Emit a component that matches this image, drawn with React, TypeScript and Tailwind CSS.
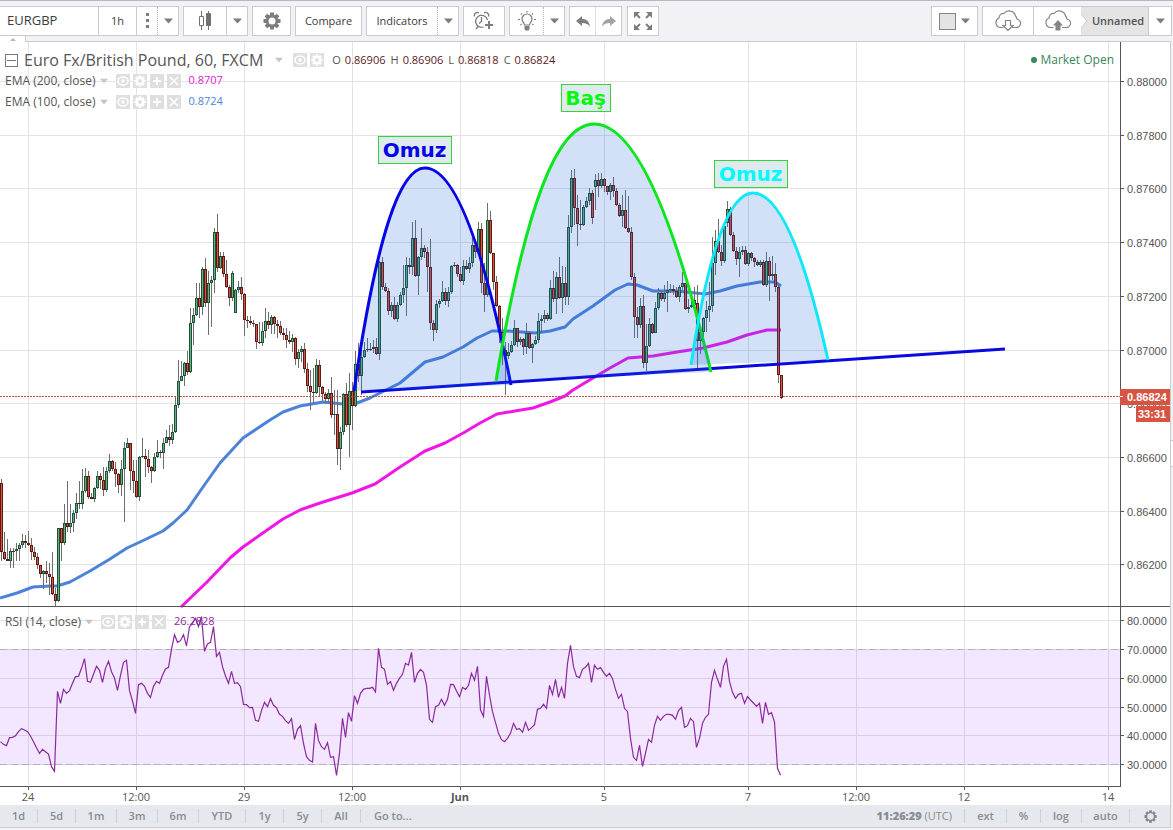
import React from 'react';
import clsx from 'clsx';

// [close, high, low, open?] in plot pixels, the open defaults to the previous close
const candles: number[][] = [
  [552, 479, 561, 483], [559, 532, 560], [561, 539, 561], [551, 548, 568], [551, 548, 568], [549, 543, 561], [545, 543, 561], [541, 534, 548],
  [543, 535, 548], [545, 531, 546], [552, 538, 560], [557, 547, 560], [565, 553, 569], [574, 565, 578], [571, 570, 589], [574, 561, 583],
  [577, 563, 595], [594, 552, 595], [601, 588, 606], [528, 528, 602], [543, 528, 561], [523, 504, 545], [527, 481, 532], [523, 504, 533],
  [513, 510, 532], [503, 493, 519], [504, 481, 509], [491, 469, 509], [476, 468, 493], [497, 471, 499], [499, 493, 499], [488, 487, 502],
  [476, 471, 489], [480, 473, 489], [490, 467, 496], [471, 467, 492], [461, 454, 473], [469, 460, 471], [474, 462, 487], [485, 473, 493],
  [469, 460, 496], [448, 442, 522], [443, 438, 448], [471, 443, 490], [481, 460, 493], [497, 460, 498], [457, 456, 501], [456, 438, 458],
  [459, 449, 477], [467, 450, 473], [471, 466, 483], [457, 453, 472], [452, 440, 458], [453, 450, 458], [443, 438, 469], [437, 430, 443],
  [440, 425, 446], [432, 424, 444], [405, 396, 433], [381, 360, 408], [376, 361, 381], [363, 362, 386], [372, 351, 375], [323, 308, 373],
  [315, 308, 345], [298, 283, 316], [307, 283, 318], [269, 267, 315], [303, 258, 307], [283, 271, 335], [280, 276, 327], [232, 228, 293],
  [268, 214, 272], [256, 252, 269], [274, 252, 277], [287, 260, 288], [298, 285, 306], [273, 271, 301], [290, 289, 313, 313], [287, 281, 293],
  [294, 277, 300], [320, 293, 336], [321, 316, 328], [323, 316, 325], [324, 320, 327], [342, 324, 349], [343, 322, 344], [331, 322, 346],
  [321, 308, 338], [325, 312, 329], [317, 315, 334], [324, 316, 334], [326, 320, 338], [333, 321, 335], [335, 328, 340], [340, 328, 348],
  [342, 331, 344], [338, 334, 352], [359, 337, 365], [352, 349, 368], [349, 346, 362], [369, 343, 373], [386, 363, 392], [392, 370, 410],
  [393, 368, 403], [365, 359, 394], [387, 360, 397], [394, 386, 401], [399, 392, 404], [393, 389, 404], [415, 377, 418], [414, 390, 435],
  [449, 390, 465], [432, 427, 470], [394, 393, 435], [425, 383, 427], [391, 373, 457], [406, 382, 430], [364, 351, 407], [376, 343, 382],
  [357, 350, 395], [350, 342, 358], [349, 338, 352], [349, 343, 351], [347, 340, 353], [354, 338, 355], [262, 261, 360], [287, 257, 290],
  [291, 283, 292], [311, 288, 315], [305, 302, 317], [319, 297, 320], [305, 302, 322], [295, 292, 306], [288, 265, 303], [265, 257, 316],
  [267, 258, 274], [238, 222, 275], [276, 220, 277], [257, 256, 295], [248, 228, 260], [252, 245, 258], [267, 247, 292], [323, 239, 330],
  [330, 320, 341], [304, 300, 333], [301, 299, 308], [292, 281, 302], [301, 288, 305], [292, 287, 307], [266, 265, 294], [265, 262, 267],
  [274, 264, 277], [281, 267, 282], [266, 260, 285], [269, 260, 270], [263, 257, 273], [245, 238, 267], [252, 243, 258], [229, 222, 253],
  [283, 223, 293], [295, 263, 312], [220, 203, 297], [253, 211, 254], [282, 253, 290], [306, 276, 307], [332, 305, 343], [350, 318, 365],
  [356, 342, 395], [352, 343, 359], [345, 341, 353], [328, 320, 346], [342, 328, 347], [339, 337, 345], [347, 338, 355], [333, 323, 354],
  [348, 332, 349], [344, 343, 363], [340, 336, 345], [321, 313, 343], [319, 315, 333], [315, 310, 323], [319, 313, 321], [288, 280, 320],
  [299, 271, 302], [277, 272, 314], [298, 257, 299], [283, 266, 313], [297, 267, 305], [227, 215, 305], [178, 170, 233], [208, 169, 225],
  [224, 195, 246], [225, 200, 230], [207, 205, 226], [201, 197, 208], [193, 188, 205], [218, 190, 224], [180, 174, 210, 187], [186, 173, 197],
  [179, 173, 188], [186, 178, 192], [192, 186, 195], [185, 183, 200], [191, 177, 197], [205, 188, 206], [216, 203, 217], [210, 195, 227],
  [228, 190, 229], [232, 196, 233], [277, 227, 280], [317, 273, 338], [325, 307, 338], [306, 298, 328], [363, 295, 368], [346, 324, 371],
  [324, 318, 347], [333, 323, 334], [308, 302, 333], [293, 288, 310], [299, 291, 301], [293, 285, 302], [290, 281, 312], [289, 284, 293],
  [291, 285, 295], [297, 287, 298], [287, 285, 302], [283, 272, 290], [309, 283, 310], [307, 299, 313], [305, 298, 308], [300, 287, 308],
  [341, 285, 368, 303], [332, 329, 354], [318, 317, 342], [310, 301, 332], [306, 282, 322], [263, 237, 312], [241, 230, 275], [252, 219, 253],
  [261, 245, 266], [226, 224, 263], [209, 201, 227, 223], [235, 207, 236], [251, 232, 252], [259, 247, 265], [252, 247, 277], [250, 246, 255],
  [264, 246, 265], [253, 252, 266], [258, 252, 261], [262, 257, 267], [265, 260, 266], [262, 260, 267], [285, 260, 286], [261, 252, 287],
  [276, 257, 301], [274, 256, 280], [287, 263, 292], [375, 285, 383], [398, 375, 399],
];

// three units to a pixel, measured from RSI_TOP
const RSI_TOP = 600;
const rsi = [
  425, 433, 437, 413, 412, 407, 395, 386, 390, 395, 408, 425, 443, 460, 448, 455, 462, 500, 514, 274, 310, 268, 280, 272, 250, 230, 229, 205, 176,
  244, 247, 223, 199, 211, 247, 205, 184, 215, 234, 271, 226, 187, 181, 272, 303, 340, 254, 250, 259, 280, 292, 259, 244, 250, 226, 207, 202, 148,
  104, 127, 122, 104, 138, 80, 70, 55, 80, 50, 154, 132, 127, 80, 169, 157, 200, 228, 250, 214, 250, 248, 260, 313, 314, 323, 322, 361, 364, 332,
  307, 320, 296, 316, 323, 343, 349, 362, 370, 356, 418, 388, 377, 430, 470, 481, 486, 370, 422, 440, 448, 428, 472, 470, 526, 460, 355, 412, 338,
  364, 287, 310, 280, 268, 265, 265, 262, 276, 145, 202, 208, 253, 245, 271, 250, 235, 223, 190, 195, 157, 247, 220, 208, 217, 255, 358, 367, 320,
  316, 298, 316, 298, 253, 254, 273, 290, 262, 268, 256, 220, 241, 199, 330, 349, 229, 285, 335, 368, 400, 419, 425, 415, 400, 370, 388, 386, 397,
  367, 391, 383, 374, 328, 325, 313, 325, 256, 283, 238, 292, 262, 295, 190, 136, 200, 229, 233, 208, 202, 190, 247, 196, 208, 203, 217, 229, 220,
  236, 268, 295, 283, 325, 335, 415, 472, 481, 436, 499, 460, 418, 427, 376, 349, 361, 349, 343, 343, 346, 358, 332, 322, 382, 377, 355, 365, 442,
  415, 370, 352, 343, 247, 211, 238, 262, 199, 178, 244, 277, 295, 283, 280, 310, 290, 300, 309, 319, 310, 370, 307, 343, 338, 366, 505, 526,
];

const ema100 =
  '0,598 17,593 33,587 50,586 57,586 70,582 90,571 110,559 127,548 140,542 163,531 173,523 187,510 203,487 220,463 243,438 270,420 283,412 300,406 323,402 343,404 357,403 370,398 380,393 400,383 425,362 443,357 463,347 477,338 492,331 507,331 535,333 550,331 565,327 573,319 593,306 615,290 628,284 637,285 653,291 677,291 705,294 720,291 737,286 760,282 775,282 781,286';
const ema200 =
  '181,607 207,582 230,558 243,547 260,535 283,519 300,510 320,503 352,493 375,484 400,467 425,451 445,443 465,432 480,423 497,414 515,411 533,408 550,402 565,396 573,390 593,378 610,368 628,358 653,356 677,352 703,348 727,342 747,335 767,330 781,330';

const arcs = [
  { d: 'M354 391C376 240 399 168 425 168Q468 168 511 385', color: '#0505e6' },
  { d: 'M496 381C526 204 557 124 594 124Q652 124 711 372', color: '#0be61e' },
  { d: 'M691 365C709 247 730 193 753 193Q791 193 828 360', color: '#0fe8f7' },
];

const notes = [
  { x: 378, y: 136, w: 73, text: 'Omuz', color: '#0505e6' },
  { x: 561, y: 84, w: 49, text: 'Baş', color: '#00fa0c' },
  { x: 714, y: 160, w: 73, text: 'Omuz', color: '#00fbff' },
];

const times = [
  { x: 28, label: '24' },
  { x: 136, label: '12:00' },
  { x: 244, label: '29' },
  { x: 352, label: '12:00' },
  { x: 460, label: 'Jun', bold: true },
  { x: 604, label: '5' },
  { x: 748, label: '7' },
  { x: 856, label: '12:00' },
  { x: 964, label: '12' },
  { x: 1108, label: '14' },
];

const prices = ['0.88000', '0.87800', '0.87600', '0.87400', '0.87200', '0.87000', '0.86800', '0.86600', '0.86400', '0.86200'];
const priceY = (i: number) => Math.round(81 + i * 53.7) + 0.5;

const rsiLevels = [
  { y: 620.5, label: '80.0000' },
  { y: 649.5, label: '70.0000' },
  { y: 678.5, label: '60.0000' },
  { y: 707.5, label: '50.0000' },
  { y: 735.5, label: '40.0000' },
  { y: 764.5, label: '30.0000' },
];

const Caret = ({ className = 'fill-[#7d7d7d]' }: { className?: string }) => (
  <svg width="9" height="6" viewBox="0 0 9 6" className={clsx('shrink-0', className)}>
    <path d="M0 0.5h9L4.5 5.5z" />
  </svg>
);

const Gear = ({ size, color, hole, r = 3 }: { size: number; color: string; hole: string; r?: number }) => (
  <svg width={size} height={size} viewBox="0 0 18 18" fill={color}>
    {[0, 45, 90, 135].map((a) => (
      <rect key={a} x="7" y="0.5" width="4" height="17" rx="0.5" transform={`rotate(${a} 9 9)`} />
    ))}
    <circle cx="9" cy="9" r="6.3" />
    <circle cx="9" cy="9" r={r} fill={hole} />
  </svg>
);

const CloudShape = () => (
  <path d="M9.5 18.5H6a5 5 0 0 1-1-9.5 4.5 4.5 0 0 1 5-4.5 6.5 6.5 0 0 1 11.5 2.5a5 5 0 0 1 1.5 3 4.3 4.3 0 0 1-1.5 8.5h-3.5" fill="none" stroke="#858585" strokeWidth="1.2" />
);

const group = 'flex h-[30px] items-stretch border border-[#c9cbcf] bg-white';
const single = 'flex h-[30px] items-center justify-center border border-[#c9cbcf] bg-white';
const cell = 'flex items-center justify-center';

function Toolbar() {
  return (
    <header className="flex h-[41px] shrink-0 items-start justify-between border-t border-[#b9b8c2] bg-[#f1f1f6] pt-[5px] text-[11px] text-[#3c3c3c]">
      <div className="flex gap-1">
        <div className={clsx(group, 'w-[179px] border-l-0')}>
          <input aria-label="Symbol" defaultValue="EURGBP" className="w-[98px] pl-[7px] text-[13px] outline-none" />
          <button className={clsx(cell, 'w-[39px] border-x border-[#c9cbcf]')}>1h</button>
          <button aria-label="Favorite intervals" className={clsx(cell, 'w-[21px] border-r border-dotted border-[#b5b5b5]')}>
            <svg width="3" height="16" fill="#7d7d7d">
              <path d="M0 0h3v3H0zM0 6h3v3H0zM0 12h3v3H0z" />
            </svg>
          </button>
          <button aria-label="Intervals" className={clsx(cell, 'flex-1')}><Caret /></button>
        </div>
        <div className={clsx(group, 'w-[65px]')}>
          <button aria-label="Candles" className={clsx(cell, 'w-[43px] border-r border-[#c9cbcf]')}>
            <svg width="14" height="20" fill="none" stroke="#707070">
              <path d="M3.5 0v5M3.5 15v4M1.5 5.5h4v9h-4z" />
              <path d="M10.5 0v19" />
              <path d="M8.5 2.5h4v12h-4z" fill="#707070" />
            </svg>
          </button>
          <button aria-label="Chart types" className={clsx(cell, 'flex-1')}><Caret /></button>
        </div>
        <button aria-label="Settings" className={clsx(single, 'w-[39px]')}>
          <Gear size={18} color="#7d7d7d" hole="#fff" r={3.5} />
        </button>
        <button className={clsx(single, 'w-[67px]')}>Compare</button>
        <div className={clsx(group, 'w-[93px]')}>
          <button className={clsx(cell, 'w-[71px] border-r border-dotted border-[#b5b5b5]')}>Indicators</button>
          <button aria-label="Indicator templates" className={clsx(cell, 'flex-1')}><Caret /></button>
        </div>
        <button aria-label="Add alert" className={clsx(single, 'w-[42px]')}>
          <svg width="22" height="20" viewBox="0 0 22 20" fill="none" stroke="#7d7d7d" strokeWidth="1.3">
            <path d="M14.5 9a6 6 0 1 0-4 7M5 15.5l-2 2.5M8.5 6v4.5l-2.5 2" />
            <path d="M1.5 5.5a3 3 0 0 1 4.5-3.5M11 2a3 3 0 0 1 4.5 3.5" />
            <path d="M16 10v8M12 14h8" strokeWidth="2" />
          </svg>
        </button>
        <div className={clsx(group, 'w-[56px]')}>
          <button aria-label="Ideas" className={clsx(cell, 'w-[34px] border-r border-dotted border-[#b5b5b5]')}>
            <svg width="20" height="20" viewBox="0 0 20 20" fill="none" stroke="#7d7d7d" strokeWidth="1.2">
              <path d="M7.5 14c0-2-2.5-3-2.5-6a5 5 0 0 1 10 0c0 3-2.5 4-2.5 6z" />
              <path d="M7.5 15h5v3l-1 1.5h-3l-1-1.5z" fill="#7d7d7d" stroke="none" />
              <path d="M10 0v1.5M4 2.5l1 1M16 2.5l-1 1M1 8.5h2M17 8.5h2M3.5 14l1-1M16.5 14l-1-1" />
            </svg>
          </button>
          <button aria-label="More ideas" className={clsx(cell, 'flex-1')}><Caret /></button>
        </div>
        <div className={clsx(group, 'w-[53px]')}>
          <button aria-label="Undo" className={clsx(cell, 'w-[26px] border-r border-[#dcdde0]')}>
            <svg width="14" height="11" viewBox="0 0 14 11" fill="#7d7d7d"><path d="M0 5l6-5v3c4.5 0 7.5 2.5 8 8-1.5-3-4-4-8-4v3z" /></svg>
          </button>
          <button aria-label="Redo" className={clsx(cell, 'flex-1')}>
            <svg width="14" height="11" viewBox="0 0 14 11" fill="#a3a3a3"><path d="M14 5L8 0v3C3.5 3 .5 5.5 0 11c1.5-3 4-4 8-4v3z" /></svg>
          </button>
        </div>
        <button aria-label="Fullscreen" className={clsx(single, 'ml-px w-[32px]')}>
          <svg width="18" height="18" viewBox="0 0 18 18" fill="#7d7d7d" stroke="#7d7d7d" strokeWidth="2">
            <path d="M2 2l4 4M16 2l-4 4M2 16l4-4M16 16l-4-4" />
            <path d="M0 0h6L0 6zM18 0v6l-6-6zM0 18v-6l6 6zM18 18h-6l6-6z" stroke="none" />
          </svg>
        </button>
      </div>
      <div className="mr-px flex gap-1">
        <button aria-label="Background" className={clsx(single, 'w-[47px] gap-[5px]')}>
          <span className="h-[17px] w-[17px] border border-[#858585] bg-[#e3e3e3]" />
          <Caret />
        </button>
        <div className={group}>
          <button aria-label="Load chart" className={clsx(cell, 'w-[51px] border-r border-[#c9cbcf]')}>
            <svg width="28" height="24" viewBox="0 0 28 24">
              <CloudShape />
              <path d="M11.5 11.5h5v5h2.5L14 21.5 9 16.5h2.5z" fill="#fff" stroke="#858585" strokeWidth="1.2" />
            </svg>
          </button>
          <button aria-label="Save chart" className={clsx(cell, 'w-[47px]')}>
            <svg width="28" height="24" viewBox="0 0 28 24">
              <CloudShape />
              <path d="M11.5 21.5v-5H9L14 11l5 5.500h-2.5v5z" fill="#858585" />
            </svg>
          </button>
          <button className="flex w-[67px] items-center bg-[#e4e4e4] font-semibold text-[#555]">
            <svg width="7" height="14" viewBox="0 0 7 14" fill="#fff" stroke="#c9cbcf"><path d="M0 0l6 7-6 7" /></svg>
            <span className="flex-1 text-center">Unnamed</span>
          </button>
          <button aria-label="Chart menu" className={clsx(cell, 'w-[23px] border-l border-[#c9cbcf]')}><Caret /></button>
        </div>
      </div>
    </header>
  );
}

const chip = 'flex h-[14px] w-[14px] items-center justify-center bg-[#dfdfdf]';

function Chips({ full = true }: { full?: boolean }) {
  return (
    <div className="flex gap-[3px]">
      <button aria-label="Hide" className={chip}>
        <svg width="12" height="10" viewBox="0 0 12 10" fill="none" stroke="#fff" strokeWidth="1.5">
          <ellipse cx="6" cy="5" rx="5" ry="4" />
          <circle cx="6" cy="5" r="1" />
        </svg>
      </button>
      <button aria-label="Format" className={chip}><Gear size={12} color="#fff" hole="#dfdfdf" /></button>
      {full && (
        <>
          <button aria-label="Add" className={chip}>
            <svg width="10" height="10" stroke="#fff" strokeWidth="2"><path d="M5 1v8M1 5h8" /></svg>
          </button>
          <button aria-label="Remove" className={chip}>
            <svg width="10" height="10" stroke="#fff" strokeWidth="1.5"><path d="M1 1l8 8M9 1L1 9" /></svg>
          </button>
        </>
      )}
    </div>
  );
}

function StudyRow({ name, value, valueClass }: { name: string; value: string; valueClass: string }) {
  return (
    <div className="flex h-[21px] items-center text-[12px] text-[#555]">
      <span>{name}</span>
      <span className="mr-2 ml-1"><Caret className="w-[8px] fill-[#c4c4c4]" /></span>
      <Chips />
      <span className={clsx('ml-2 text-[11px]', valueClass)}>{value}</span>
    </div>
  );
}

function Ohlc({ k, v }: { k: string; v: string }) {
  return (
    <span className="flex gap-[4px]">
      <span>{k}</span>
      <span className="text-[#5b1a1a]">{v}</span>
    </span>
  );
}

function Plot() {
  let prev = 0;
  return (
    <svg className="block h-[763px] w-full">
      <g transform="translate(0 -42)">
        {/* grid */}
        <g stroke="#e3e3e3">
          {times.map((t) => <path key={t.x} d={`M${t.x + 0.5} 42V785`} />)}
          {prices.map((p, i) => <line key={p} x1="0" x2="100%" y1={priceY(i)} y2={priceY(i)} />)}
          {rsiLevels.map((l) => <line key={l.label} x1="0" x2="100%" y1={l.y} y2={l.y} />)}
        </g>

        {/* moving averages */}
        <g fill="none" strokeWidth="3" strokeLinejoin="round">
          <polyline points={ema200} stroke="#f016e6" />
          <polyline points={ema100} stroke="#4d82d9" />
        </g>

        {/* candles */}
        <g shapeRendering="crispEdges">
          {candles.map(([close, high, low, from], i) => {
            const open = from ?? prev;
            prev = close;
            const up = close < open;
            const x = i * 3;
            const top = Math.min(open, close);
            const h = Math.max(Math.abs(close - open), 1);
            return (
              <g key={i}>
                <rect x={x + 1} y={high} width="1" height={low - high} fill="#6e6e6e" />
                <rect x={x} y={top} width="3" height={h} fill={up ? '#1f5136' : '#5e1a12'} />
                {h > 2 && <rect x={x + 1} y={top + 1} width="1" height={h - 2} fill={up ? '#63b183' : '#d75442'} />}
              </g>
            );
          })}
        </g>
        <line x1="0" x2="100%" y1="396.5" y2="396.5" stroke="#bd5148" strokeDasharray="2 1" />

        {/* drawings */}
        <path d="M361 392L1005 349" stroke="#0a0ae0" strokeWidth="3" />
        {arcs.map((a) => (
          <path key={a.color} d={a.d} fill="rgba(30,100,220,0.2)" stroke={a.color} strokeWidth="3" />
        ))}
        {notes.map((n) => (
          <g key={n.x}>
            <rect x={n.x + 0.5} y={n.y + 0.5} width={n.w} height="27" fill="#dfeaef" stroke="#35d435" />
            <text x={n.x + n.w / 2} y={n.y + 21} textAnchor="middle" fill={n.color} className="font-['DejaVu_Sans'] text-[20px] font-bold">{n.text}</text>
          </g>
        ))}

        {/* rsi pane */}
        <rect x="0" y="649" width="100%" height="116" fill="rgba(153,51,255,0.12)" />
        <line x1="0" x2="100%" y1="649.5" y2="649.5" stroke="#b9adc0" strokeDasharray="7 4" />
        <line x1="0" x2="100%" y1="764.5" y2="764.5" stroke="#b9adc0" strokeDasharray="7 4" />
        <polyline points={rsi.map((v, i) => `${i * 3 + 0.5},${RSI_TOP + v / 3}`).join(' ')} fill="none" stroke="#8a2a9e" strokeWidth="1.2" />

        <line x1="0" x2="100%" y1="606.5" y2="606.5" stroke="#555" />
        <line x1="0" x2="100%" y1="786.5" y2="786.5" stroke="#555" />
        {times.map((t) => (
          <g key={t.x}>
            <path d={`M${t.x + 0.5} 787v3`} stroke="#555" />
            <text x={t.x} y="801" textAnchor="middle" fill="#555" className={clsx('text-[11px]', t.bold && 'font-bold')}>{t.label}</text>
          </g>
        ))}
      </g>
    </svg>
  );
}

function PriceAxis() {
  return (
    <svg className="block h-[763px] w-[50px] shrink-0 font-['Liberation_Sans',sans-serif] text-[11px]">
      <g transform="translate(0 -42)" fill="#555">
        <path d="M0.5 42V787M0 606.5H50" stroke="#555" />
        {prices.map((p, i) => (
          <g key={p}>
            <path d={`M1 ${priceY(i)}h3`} stroke="#555" />
            <text x="7" y={priceY(i) + 4}>{p}</text>
          </g>
        ))}
        {rsiLevels.map((l) => (
          <g key={l.label}>
            <path d={`M1 ${l.y}h3`} stroke="#555" />
            <text x="7" y={l.y + 4}>{l.label}</text>
          </g>
        ))}
        {/* last price and bar countdown */}
        <rect y="389" width="50" height="16" fill="#d75442" />
        <path d="M0 396.5h3" stroke="#fff" />
        <rect x="16" y="406" width="34" height="16" fill="#d75442" />
        <g fill="#fff" className="font-bold">
          <text x="7" y="401">0.86824</text>
          <text x="18" y="418">33:31</text>
        </g>
      </g>
    </svg>
  );
}

const ranges = [
  { label: '1d', w: 'w-[38px]' },
  { label: '5d', w: 'w-[38px]' },
  { label: '1m', w: 'w-[41px]' },
  { label: '3m', w: 'w-[41px]' },
  { label: '6m', w: 'w-[41px]' },
  { label: 'YTD', w: 'w-[47px]' },
  { label: '1y', w: 'w-[38px]' },
  { label: '5y', w: 'w-[38px]' },
  { label: 'All', w: 'w-[39px]' },
];

const scales = [
  { label: 'ext', w: 'w-[42px]' },
  { label: '%', w: 'w-[34px]' },
  { label: 'log', w: 'w-[41px]' },
  { label: 'auto', w: 'w-[48px]' },
];

function BottomBar() {
  return (
    <footer className="mr-[2px] flex h-[23px] shrink-0 items-center justify-between border-r border-b border-[#c9cbcf] bg-[#e5e8ec] text-[11px] font-semibold text-[#8a8c90]">
      <div className="flex h-[14px] items-center">
        {ranges.map((r) => (
          <button key={r.label} className={clsx(r.w, 'h-full border-r border-[#cdd0d4] leading-[14px]')}>{r.label}</button>
        ))}
        <button className="px-[13px]">Go to...</button>
      </div>
      <div className="flex h-[14px] items-center">
        <span className="pr-3"><b>11:26:29</b> <span className="font-normal">(UTC)</span></span>
        {scales.map((s) => (
          <button key={s.label} className={clsx(s.w, 'h-full border-l border-[#cdd0d4] leading-[14px]')}>{s.label}</button>
        ))}
        <button aria-label="Scale settings" className="flex h-full w-[41px] items-center justify-center border-l border-[#cdd0d4]">
          <Gear size={13} color="#85878b" hole="#e5e8ec" r={4.5} />
        </button>
      </div>
    </footer>
  );
}

export default function App() {
  return (
    <div className="flex min-h-screen flex-col bg-[#f1f1f6] font-['Open_Sans',sans-serif]">
      <Toolbar />
      <main className="relative mr-[2px] flex border-t border-r border-[#c9cbcf] bg-white">
        <button aria-label="Collapse toolbar" className="absolute -top-[6px] left-0 flex h-[6px] w-[26px] items-center justify-center border-r border-[#c9cbcf] bg-white">
          <svg width="6" height="3" fill="#b8b8b8"><path d="M0 3l3-3 3 3z" /></svg>
        </button>
        <button aria-label="Open side panel" className="absolute top-[398px] -right-[3px] h-[27px] w-[2px] border-y border-[#c9cbcf] bg-white" />
        <div className="relative min-w-0 flex-1">
          <Plot />
          <div className="absolute top-[8px] left-[5px]">
            <div className="flex h-[20px] items-center text-[#555]">
              <button aria-label="Collapse legend" className="flex h-[13px] w-[13px] items-center justify-center border border-[#777]">
                <span className="h-px w-[9px] bg-[#777]" />
              </button>
              <h1 className="ml-[6px] text-[16px]">Euro Fx/British Pound, 60, FXCM</h1>
              <span className="mr-[10px] ml-3"><Caret className="w-[8px] fill-[#c4c4c4]" /></span>
              <Chips full={false} />
              <div className="ml-2 flex gap-[5px] text-[11px]">
                <Ohlc k="O" v="0.86906" />
                <Ohlc k="H" v="0.86906" />
                <Ohlc k="L" v="0.86818" />
                <Ohlc k="C" v="0.86824" />
              </div>
            </div>
            <StudyRow name="EMA (200, close)" value="0.8707" valueClass="text-[#e01ad6]" />
            <StudyRow name="EMA (100, close)" value="0.8724" valueClass="text-[#4d82d9]" />
          </div>
          <div className="absolute top-[569px] left-[5px]">
            <StudyRow name="RSI (14, close)" value="26.2828" valueClass="text-[#8a2a9e]" />
          </div>
          <div className="absolute top-[8px] right-[6px] flex h-[20px] items-center gap-[3px] text-[12px] text-[#38875c]">
            <span className="h-[6px] w-[6px] rounded-full bg-[#38875c]" />
            Market Open
          </div>
        </div>
        <PriceAxis />
      </main>
      <BottomBar />
    </div>
  );
}
